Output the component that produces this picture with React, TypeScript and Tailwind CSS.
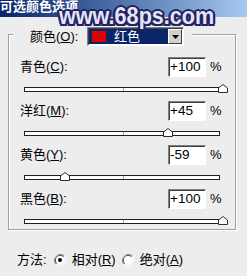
import React from "react";

const FONT = "font-['Liberation_Sans','Noto_Sans_CJK_SC',sans-serif]";

function U({ c }: { c: string }) {
  return <span className="underline underline-offset-[1px]">{c}</span>;
}

function Thumb({ value }: { value: number }) {
  const center = 122.5 + value * 0.99;
  const left = center - 24 - 5;
  return (
    <svg
      width="10"
      height="9"
      viewBox="0 0 10 9"
      className="absolute top-[-4px]"
      style={{ left }}
    >
      <polygon
        points="0.5,8.5 9.5,8.5 9.5,4 5,0.5 0.5,4"
        fill="#ffffff"
        stroke="#303030"
        strokeWidth="1"
      />
    </svg>
  );
}

function Block({
  name,
  k,
  value,
  text,
  first,
}: {
  name: string;
  k: string;
  value: number;
  text: string;
  first?: boolean;
}) {
  return (
    <div className={first ? "mt-[11px]" : "mt-[9px]"}>
      <div className="flex items-center h-[20px] pl-[11px]">
        <div className="w-[148px] text-[13px] leading-[16px] text-black">
          {name}(<U c={k} />):
        </div>
        <div className="w-[38px] h-[20px] bg-white border-t border-l border-[#808080] border-b border-r border-b-white border-r-white [box-shadow:inset_1px_1px_0_#404040] flex items-center pl-[1px] text-[13.5px] text-black leading-[16px]">
          {text}
        </div>
        <div className="ml-[4px] text-[13px] leading-[16px] text-black">%</div>
      </div>
      <div className="relative ml-[15px] mt-[10px] w-[196px] h-[5px] border border-[#202020] bg-white">
        <div className="absolute left-[98px] top-0 w-px h-[3px] bg-[#a0a0a0]" />
        <Thumb value={value} />
      </div>
    </div>
  );
}

function Radio({ checked }: { checked?: boolean }) {
  return (
    <svg width="12" height="12" viewBox="0 0 12 12">
      <path d="M10.2 1.8 A6 6 0 0 0 1.8 10.2" fill="none" stroke="#808080" strokeWidth="1" />
      <path d="M9.5 2.5 A5 5 0 0 0 2.5 9.5" fill="none" stroke="#404040" strokeWidth="1" />
      <path d="M1.8 10.2 A6 6 0 0 0 10.2 1.8" fill="none" stroke="#ffffff" strokeWidth="1" />
      <circle cx="6" cy="6" r="4" fill="#ffffff" />
      {checked && <circle cx="6" cy="6" r="2" fill="#000000" />}
    </svg>
  );
}

export default function App() {
  return (
    <div className={`relative w-[247px] h-[276px] overflow-hidden bg-[#ededed] ${FONT}`}>
      <div className="h-[17px] bg-gradient-to-r from-[#0a246a] to-[#a6caf0] text-white font-bold text-[13px] leading-[13px] whitespace-nowrap">
        可选颜色选项
      </div>

      <div className="ml-[8px] mt-[17px] w-[228px] h-[196px] border border-[#a0a0a0] [box-shadow:inset_1px_1px_0_#ffffff,1px_1px_0_#ffffff]">
        <div className="-mt-[8px] ml-[4px] w-[179px] h-[19px] bg-[#ededed] flex items-center">
          <div className="pl-[17px] w-[74px] text-[13px] leading-[16px] text-black whitespace-nowrap">
            颜色(<U c="O" />):
          </div>
          <div className="w-[97px] h-[19px] border border-t-[#808080] border-l-[#808080] border-b-white border-r-white bg-white flex p-[1px] [box-shadow:inset_1px_1px_0_#404040]">
            <div className="flex-1 bg-[#0a246a] flex items-center pl-[3px]">
              <div className="w-[14px] h-[11px] bg-[#e00000]" />
              <span className="ml-[8px] text-white text-[13px] leading-[15px]">红色</span>
            </div>
            <div className="w-[14px] bg-[#d4d0c8] border border-t-white border-l-white border-b-[#404040] border-r-[#404040] flex items-center justify-center">
              <svg width="7" height="4" viewBox="0 0 7 4">
                <polygon points="0,0 7,0 3.5,4" fill="#000" />
              </svg>
            </div>
          </div>
        </div>

        <Block name="青色" k="C" value={100} text="+100" first />
        <Block name="洋红" k="M" value={45} text="+45" />
        <Block name="黄色" k="Y" value={-59} text="-59" />
        <Block name="黑色" k="B" value={100} text="+100" />
      </div>

      <div className="mt-[22px] ml-[17px] flex items-center h-[16px] text-[13px] leading-[16px] text-black whitespace-nowrap">
        <span>方法:</span>
        <span className="ml-[7px] flex"><Radio checked /></span>
        <span className="ml-[6px]">相对(<U c="R" />)</span>
        <span className="ml-[6px] flex"><Radio /></span>
        <span className="ml-[6px]">绝对(<U c="A" />)</span>
      </div>

      <div className="absolute left-[59px] top-[4px] z-20 origin-left scale-x-[0.9] whitespace-nowrap text-[24px] font-bold leading-[24px] text-[#e4e4fa] font-['Liberation_Sans',sans-serif] [text-shadow:2.5px_0_0_#23235f,-2.5px_0_0_#23235f,0_2px_0_#23235f,0_-2px_0_#23235f,2px_1.5px_0_#23235f,-2px_1.5px_0_#23235f,2px_-1.5px_0_#23235f,-2px_-1.5px_0_#23235f]">
        www.68ps.com
      </div>
    </div>
  );
}
